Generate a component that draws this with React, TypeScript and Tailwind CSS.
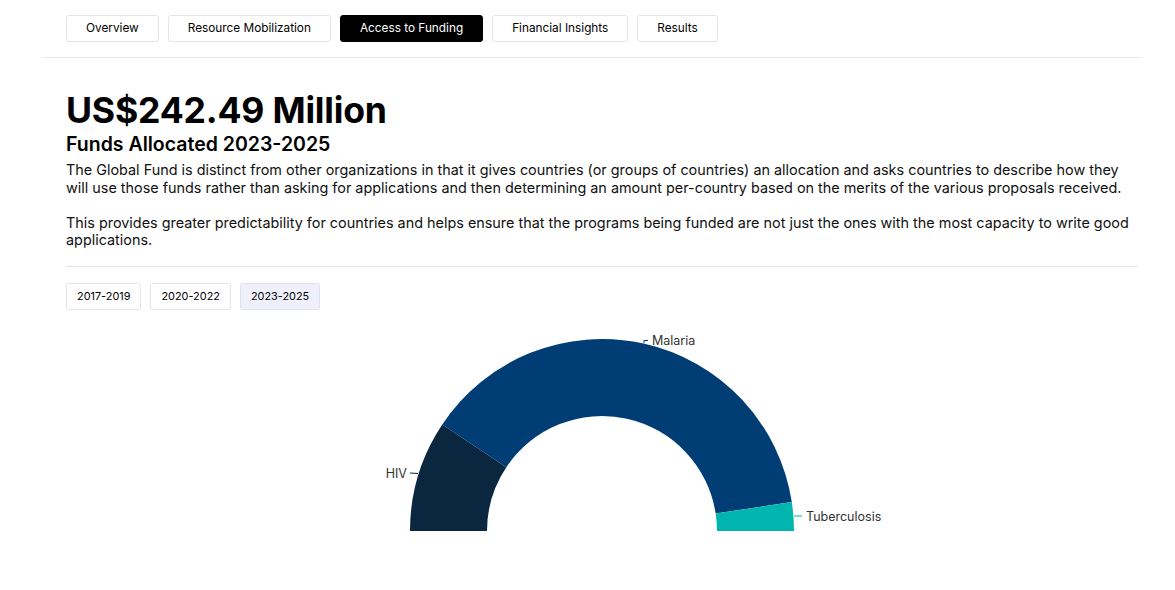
import React from "react";

const tabs = ["Overview", "Resource Mobilization", "Access to Funding", "Financial Insights", "Results"];
const years = ["2017-2019", "2020-2022", "2023-2025"];

function pt(cx: number, cy: number, r: number, deg: number) {
  const a = (deg * Math.PI) / 180;
  return [cx + r * Math.cos(a), cy - r * Math.sin(a)];
}

function arc(cx: number, cy: number, r0: number, r1: number, a0: number, a1: number) {
  const [x1, y1] = pt(cx, cy, r1, a0);
  const [x2, y2] = pt(cx, cy, r1, a1);
  const [x3, y3] = pt(cx, cy, r0, a1);
  const [x4, y4] = pt(cx, cy, r0, a0);
  const large = Math.abs(a0 - a1) > 180 ? 1 : 0;
  return `M${x1},${y1} A${r1},${r1} 0 ${large} 1 ${x2},${y2} L${x3},${y3} A${r0},${r0} 0 ${large} 0 ${x4},${y4} Z`;
}

function Chart() {
  const cx = 536;
  const cy = 206;
  const R = 192;
  const r = 115;
  const segs = [
    { a0: 180, a1: 146.3, color: "#0b2740" },
    { a0: 146.3, a1: 8.7, color: "#013d75" },
    { a0: 8.7, a1: 0, color: "#01b6af" },
  ];
  return (
    <svg width="1072" height="220" viewBox="0 0 1072 220">
      {segs.map((s, i) => (
        <path key={i} d={arc(cx, cy, r, R, s.a0, s.a1)} fill={s.color} />
      ))}
      <path d="M352,148.5 L344,148" stroke="#0b2740" strokeWidth="1" fill="none" />
      <text x="341" y="153" textAnchor="end" fontSize="12.5" fill="#333" fontFamily="Inter, sans-serif">HIV</text>
      <path d="M578,18 L578,15.5 L582,15.5" stroke="#013d75" strokeWidth="1" fill="none" />
      <text x="586" y="20" fontSize="12.5" fill="#333" fontFamily="Inter, sans-serif">Malaria</text>
      <path d="M728,191 L736,191" stroke="#01b6af" strokeWidth="1" fill="none" />
      <text x="740" y="196" fontSize="12.5" fill="#333" fontFamily="Inter, sans-serif">Tuberculosis</text>
    </svg>
  );
}

export default function App() {
  return (
    <div className="w-[1175px] h-[590px] bg-white text-black font-['Inter',sans-serif] overflow-hidden">
      <div className="ml-[42px] w-[1100px] border-b border-[#e5e7eb]">
        <div className="flex gap-[9px] pl-6 pt-[15px] pb-[15px]">
          {tabs.map((t) => (
            <button
              key={t}
              className={
                "h-[27px] px-[19px] rounded-[3px] text-[11.8px] leading-none border " +
                (t === "Access to Funding"
                  ? "bg-black text-white border-black"
                  : "bg-white text-black border-[#e3e5e8]")
              }
            >
              {t}
            </button>
          ))}
        </div>
      </div>
      <div className="ml-[66px] w-[1072px]">
        <h1 className="mt-[33px] text-[35.6px] font-bold leading-[40px] tracking-[-0.2px]">US$242.49 Million</h1>
        <h2 className="mt-[1px] text-[19.5px] font-semibold leading-[24px]">Funds Allocated 2023-2025</h2>
        <div className="mt-[5px] text-[14.4px] leading-[17.5px] text-[#111]">
          <p>
            The Global Fund is distinct from other organizations in that it gives countries (or groups of countries) an allocation and asks countries to describe how they will use those funds rather than asking for applications and then determining an amount per-country based on the merits of the various proposals received.
          </p>
          <p className="mt-[17.5px]">
            This provides greater predictability for countries and helps ensure that the programs being funded are not just the ones with the most capacity to write good applications.
          </p>
        </div>
        <div className="mt-[17px] border-t border-[#e2e4e7]" />
        <div className="flex gap-[9px] mt-[16px]">
          {years.map((y) => (
            <button
              key={y}
              className={
                "h-[27px] px-[10px] rounded-[3px] text-[10.9px] leading-none border " +
                (y === "2023-2025" ? "bg-[#eff0fb] border-[#e0e2ec]" : "bg-white border-[#e3e5e8]")
              }
            >
              {y}
            </button>
          ))}
        </div>
        <div className="mt-[15px]">
          <Chart />
        </div>
      </div>
    </div>
  );
}
